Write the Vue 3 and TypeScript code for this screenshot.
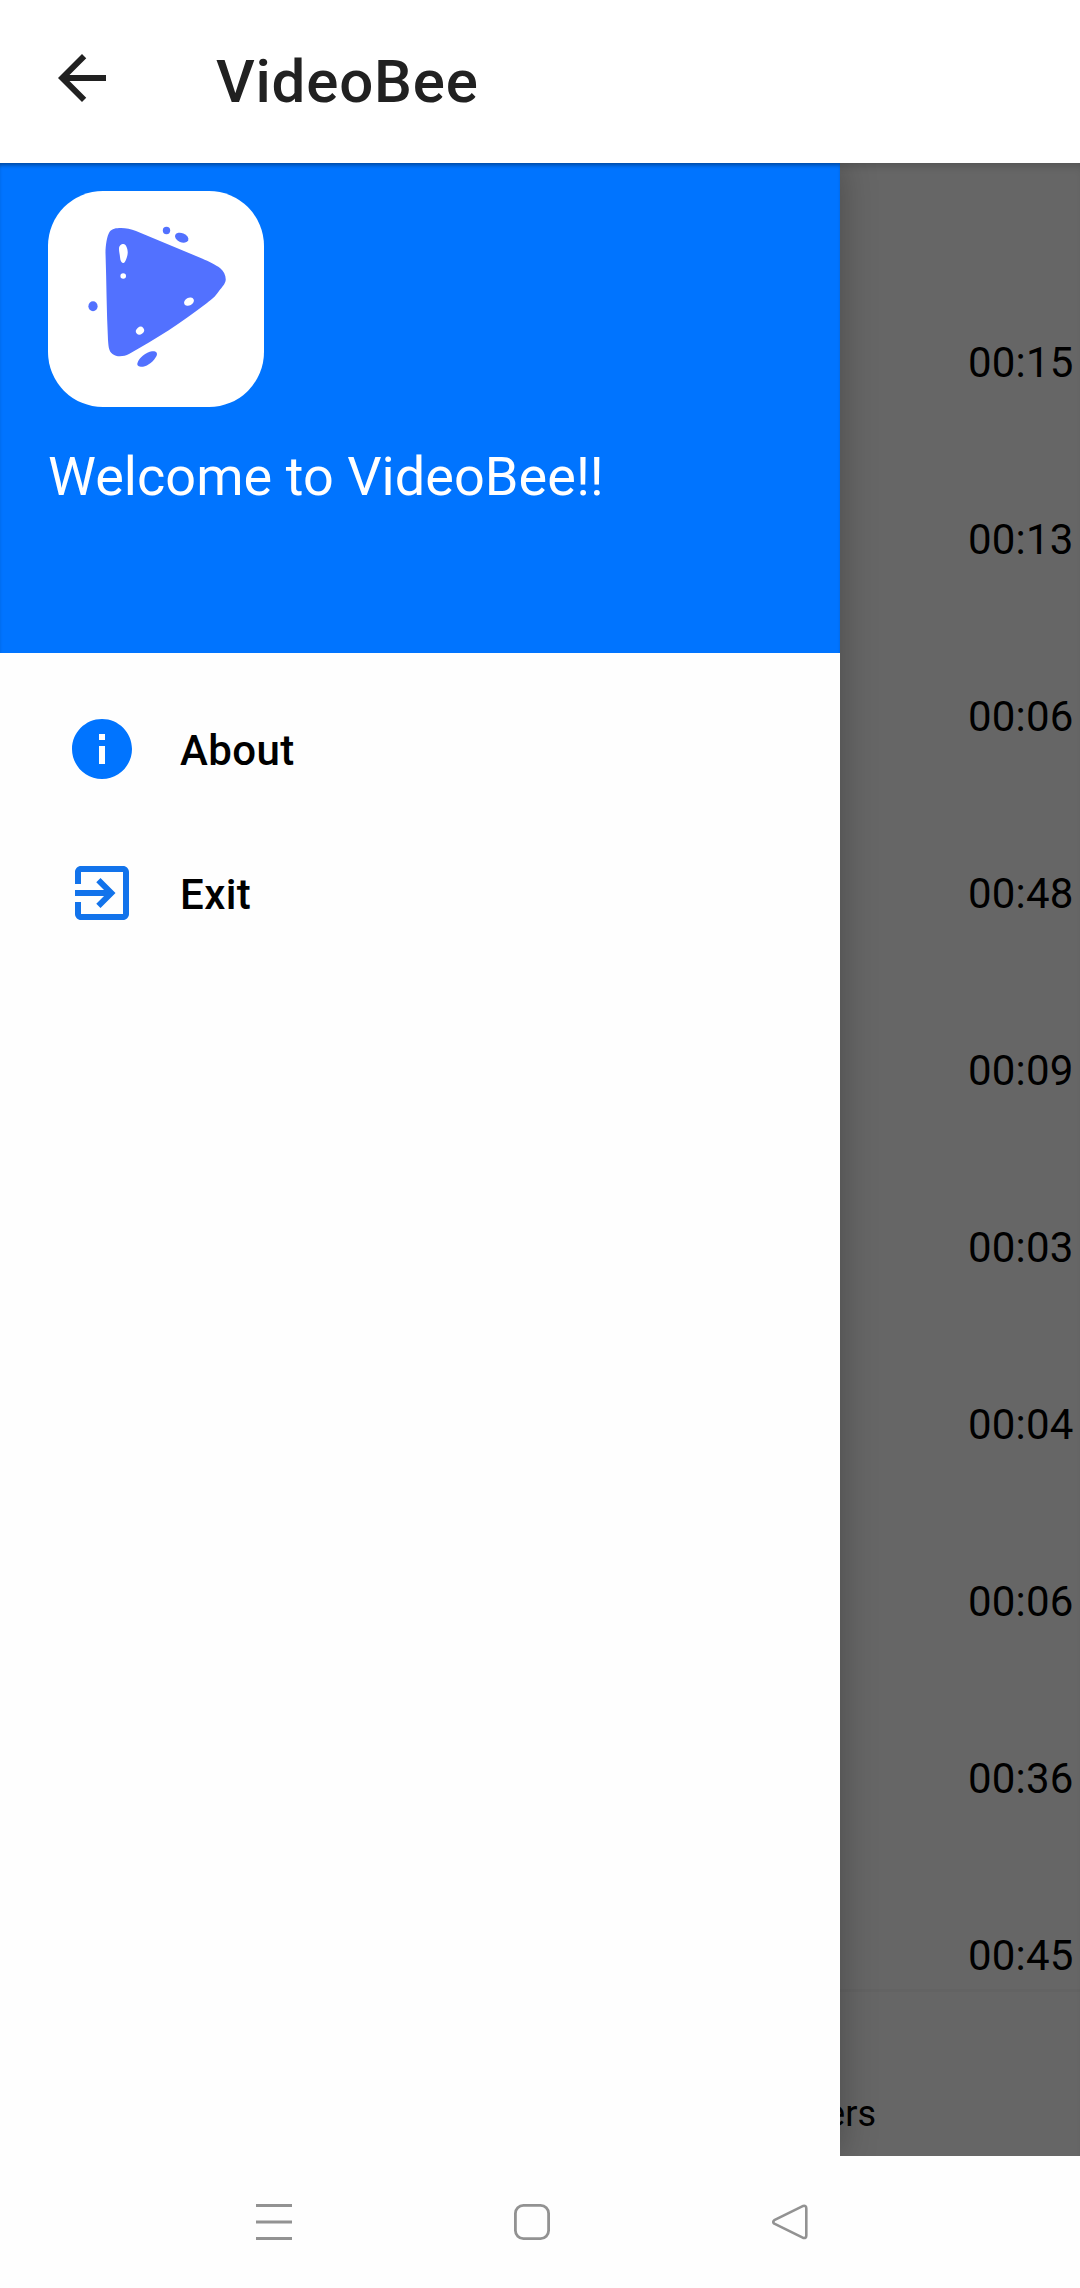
<script setup lang="ts">
const durations: string[] = [
  '00:15', '00:13', '00:06', '00:48', '00:09',
  '00:03', '00:04', '00:06', '00:36', '00:45',
]
</script>

<template>
  <div class="screen">
    <header class="app-bar">
      <svg class="back" viewBox="0 0 24 24" aria-hidden="true">
        <path d="M20 11H7.83l5.59-5.59L12 4l-8 8 8 8 1.41-1.41L7.83 13H20z" fill="#212121" />
      </svg>
      <h1 class="title">VideoBee</h1>
    </header>

    <div class="body">
      <main class="content">
        <ul class="videos">
          <li v-for="(time, index) in durations" :key="index" class="video">
            <span class="time">{{ time }}</span>
          </li>
        </ul>
        <div class="tabs"><span class="tab">Folders</span></div>
      </main>

      <div class="scrim"></div>

      <aside class="drawer">
        <div class="drawer-head">
          <svg class="logo" viewBox="0 0 216 216" aria-hidden="true">
            <rect width="216" height="216" rx="55" fill="#fff" />
            <g fill="#5271ff">
              <path d="M57.500 62C57.500 54 59 45 61.500 41C64 37.500 68 37 73 37C78 37 83 38 88 40L154 67.500C161 70.500 168 74 172 77C176 80 178 85 177.700 89C177.300 93 174 96 171 100C167 106 164 108 159 112C133 132 108 148 81 163C76 165.500 69 166.500 64.500 163C60.500 160 60.500 155 60 149C58.500 120 58.500 90 57.500 62Z" />
              <circle cx="118.500" cy="39.500" r="3.700" />
              <ellipse cx="133.700" cy="46.700" rx="7" ry="4.600" transform="rotate(22 133.700 46.700)" />
              <ellipse cx="45" cy="115.300" rx="4.600" ry="5" />
              <path d="M89.500 172C91 167 98 161 104 160.300C108 159.800 110 162 108.500 165C106 170 100 175 95 175.700C91 176 88.500 174.500 89.500 172Z" />
            </g>
            <g fill="#fff">
              <path d="M71 58C71 54.500 73 53 75.500 53C78 53 80 58 79.700 62C79.500 66 77 72 75.500 72C73.500 72 72.300 70 72 66C71.800 63 71 61 71 58Z" />
              <circle cx="75.200" cy="85" r="2.800" />
              <ellipse cx="141" cy="110.700" rx="5.200" ry="3.800" transform="rotate(-28 141 110.700)" />
              <ellipse cx="92" cy="139.700" rx="4.300" ry="3.600" transform="rotate(-40 92 139.700)" />
            </g>
          </svg>
          <p class="welcome">Welcome to VideoBee!!</p>
        </div>
        <nav class="menu">
          <a class="item">
            <svg viewBox="0 0 24 24" aria-hidden="true">
              <path d="M12 2C6.480 2 2 6.480 2 12s4.480 10 10 10 10-4.480 10-10S17.520 2 12 2zm1 15h-2v-6h2v6zm0-8h-2V7h2v2z" fill="#0074ff" />
            </svg>
            <span>About</span>
          </a>
          <a class="item">
            <svg viewBox="0 0 24 24" aria-hidden="true">
              <path d="M10.090 15.590 11.500 17l5-5-5-5-1.410 1.410L12.670 11H3v2h9.670l-2.580 2.590zM19 3H5c-1.110 0-2 .9-2 2v4h2V5h14v14H5v-4H3v4c0 1.100.89 2 2 2h14c1.100 0 2-.9 2-2V5c0-1.100-.9-2-2-2z" fill="#1273eb" />
            </svg>
            <span>Exit</span>
          </a>
        </nav>
      </aside>
    </div>

    <footer class="system-nav">
      <svg viewBox="0 0 36 36" aria-hidden="true">
        <path d="M0 1.500H36M0 18H36M0 34.500H36" fill="none" stroke="#929292" stroke-width="3" />
      </svg>
      <svg viewBox="0 0 36 36" aria-hidden="true">
        <rect x="1.400" y="1.400" width="33.200" height="33.200" rx="8" fill="none" stroke="#929292" stroke-width="2.800" />
      </svg>
      <svg viewBox="0 0 36 36" aria-hidden="true">
        <path d="M31.200 1.900 2.300 16.200Q.2 17.900 2.300 19.700L31.200 33.900Q34.300 34.600 34.300 31.400V4.400Q34.300 1.200 31.200 1.900Z" fill="none" stroke="#929292" stroke-width="2.600" stroke-linejoin="round" />
      </svg>
    </footer>
  </div>
</template>

<style>
body {
  margin: 0;
  background: #fefefe;
}
</style>

<style scoped>
.screen {
  display: flex;
  flex-direction: column;
  width: 1080px;
  height: 2288px;
  overflow: hidden;
  background: #fefefe;
  color: #000;
  font-family: Roboto, "Liberation Sans", sans-serif;
}

.app-bar {
  display: flex;
  flex: none;
  height: 163px;
  box-sizing: border-box;
  padding: 42px 0 0 46px;
  background: #fff;
}

.back {
  width: 72px;
  height: 72px;
}

.title {
  margin: 5px 0 0 98px;
  color: #212121;
  font-size: 60px;
  font-weight: 500;
  line-height: 70px;
  letter-spacing: 0.8px;
}

.body {
  position: relative;
  flex: none;
  height: 1993px;
  overflow: hidden;
}

.content {
  display: flex;
  flex-direction: column;
  height: 100%;
  background: #fff;
}

.videos {
  flex: none;
  height: 1826px;
  box-sizing: border-box;
  margin: 0;
  padding: 111px 0 0;
  list-style: none;
  overflow: hidden;
}

.video {
  display: flex;
  align-items: center;
  justify-content: flex-end;
  height: 177px;
}

.time {
  width: 112px;
  font-size: 42px;
  line-height: 50px;
  letter-spacing: 0.2px;
  white-space: nowrap;
}

.tabs {
  flex: 1;
  padding: 101px 0 0 752px;
  border-top: 3px solid #f7f7f7;
  font-size: 36px;
  line-height: 42px;
}

.tab {
  display: inline-block;
  width: 124px;
  text-align: right;
}

.scrim {
  position: absolute;
  inset: 0;
  background: rgba(0, 0, 0, 0.6);
  box-shadow: inset 0 8px 10px -6px rgba(0, 0, 0, 0.22);
}

.drawer {
  position: absolute;
  top: 0;
  bottom: 0;
  left: 0;
  width: 840px;
  background: #fefefe;
  box-shadow: 0 0 34px rgba(0, 0, 0, 0.28);
}

.drawer-head {
  display: flex;
  flex-direction: column;
  height: 490px;
  box-sizing: border-box;
  padding: 28px 48px 0;
  background: #0074ff;
  box-shadow: inset 0 4px 4px -2px rgba(0, 0, 0, 0.4);
}

.logo {
  width: 216px;
  height: 216px;
}

.welcome {
  margin: 38px 0 0;
  color: #fff;
  font-size: 54px;
  line-height: 64px;
  letter-spacing: 0.05px;
  white-space: nowrap;
}

.menu {
  padding-top: 24px;
}

.item {
  display: flex;
  align-items: center;
  gap: 42px;
  height: 144px;
  padding-left: 66px;
  font-size: 42px;
  font-weight: 500;
  line-height: 50px;
  letter-spacing: 0.4px;
}

.item svg {
  width: 72px;
  height: 72px;
}

.item span {
  padding-top: 4px;
}

.system-nav {
  display: flex;
  flex: 1;
  align-items: center;
  gap: 222px;
  padding-left: 256px;
}

.system-nav svg {
  width: 36px;
  height: 36px;
}
</style>
